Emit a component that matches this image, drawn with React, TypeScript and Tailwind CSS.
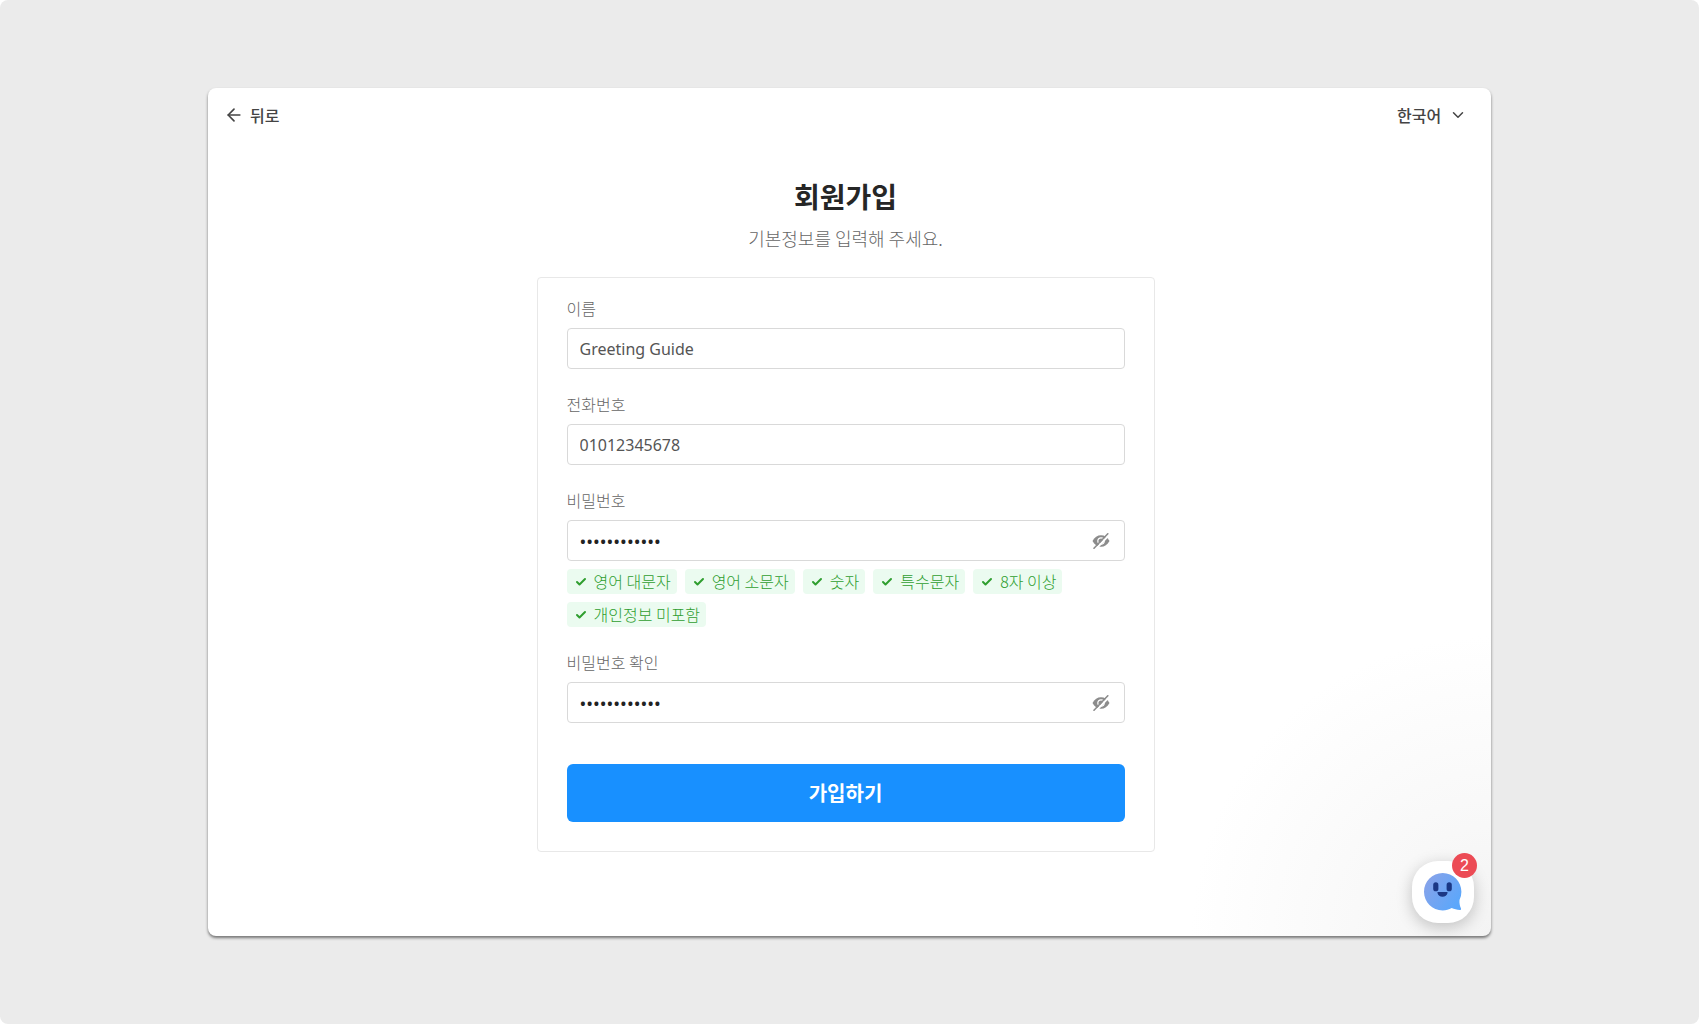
import { useState } from "react"
import { ArrowLeft, Check, ChevronDown } from "lucide-react"

const passwordRules = ["영어 대문자", "영어 소문자", "숫자", "특수문자", "8자 이상", "개인정보 미포함"]

const EyeOffIcon = () => (
    <svg width="18" height="16" viewBox="0 0 18 16" fill="none">
        <path d="M.5 8C2.500 4.200 5.500 2.200 9 2.200s6.500 2 8.500 5.800c-2 3.800-5 5.800-8.500 5.800S2.500 11.800.5 8Z" fill="#8c8c8c" />
        <circle cx="9" cy="8" r="3.200" stroke="#fff" strokeWidth="1.200" />
        <path d="M3.500 16.500 17.500 1.500" stroke="#fff" strokeWidth="2" />
        <path d="M2 15.200 15.800.8" stroke="#8c8c8c" strokeWidth="1.600" strokeLinecap="round" />
    </svg>
)

interface FieldProps {
    id: string
    label: string
    initialValue: string
    secret?: boolean
}

const Field = ({ id, label, initialValue, secret }: FieldProps) => {
    const [value, setValue] = useState(initialValue)
    const [hidden, setHidden] = useState(Boolean(secret))
    return (
        <div className="flex flex-col gap-2">
            <label htmlFor={id} className="text-base leading-[23px] font-light text-[#666]">{label}</label>
            <div className="flex h-[41px] items-center rounded border border-[#d9d9d9] bg-white pr-3.5 pl-3">
                <input
                    id={id}
                    type={hidden ? "password" : "text"}
                    value={value}
                    onChange={(e) => setValue(e.target.value)}
                    className={
                        secret
                            ? "min-w-0 flex-1 font-['Noto_Sans','Noto_Sans_CJK_KR',sans-serif] text-lg leading-6 text-[#222] outline-none"
                            : "min-w-0 flex-1 font-['Noto_Sans','Noto_Sans_CJK_KR',sans-serif] text-base leading-6 text-[#555] outline-none"
                    }
                />
                {secret && (
                    <button type="button" aria-label="비밀번호 표시" onClick={() => setHidden(!hidden)}>
                        <EyeOffIcon />
                    </button>
                )}
            </div>
        </div>
    )
}

const PasswordRules = () => (
    <ul className="mt-2 flex flex-wrap gap-2">
        {passwordRules.map((rule) => (
            <li key={rule} className="flex h-[25px] items-center gap-[7px] rounded bg-[#ebfbf0] pr-1.5 pb-0.5 pl-2 text-base font-light text-[#2f9e2f]">
                <Check size={12} strokeWidth={4} className="mt-0.5" />
                {rule}
            </li>
        ))}
    </ul>
)

const ChatButton = () => (
    <button type="button" aria-label="채팅 상담" className="absolute right-[17px] bottom-[13px] flex size-[62px] items-center justify-center rounded-[26px] bg-white shadow-[0_4px_16px_rgba(0,0,0,0.22)]">
        <svg width="40" height="40" viewBox="0 0 40 40" fill="none">
            <defs>
                <linearGradient id="bubble" x1="4" y1="8" x2="36" y2="30" gradientUnits="userSpaceOnUse">
                    <stop stopColor="#86a3ea" />
                    <stop offset="1" stopColor="#5ba7fb" />
                </linearGradient>
            </defs>
            <path d="M19.700 1C9.300 1 1 9.300 1 19.700S9.300 38.400 19.700 38.400c3.300 0 6.300-.9 9-2.400 2.500.9 5.200 1.700 8.200 2 .9.100 1.500-.8 1.100-1.600-1.200-2.600-1.800-5.400-1.500-8.400a18.600 18.600 0 0 0 1.900-8.300C38.400 9.300 30.100 1 19.700 1Z" fill="url(#bubble)" />
            <rect x="10.200" y="10.300" width="5.200" height="9" rx="2.600" fill="#1b3784" />
            <rect x="23.600" y="10.300" width="5.200" height="9" rx="2.600" fill="#1b3784" />
            <path d="M15 20h9c.5 0 .7.300.6.700-.5 2.500-2.600 4.100-5.100 4.100s-4.600-1.600-5.100-4.100c-.1-.4.100-.7.600-.7Z" fill="#1b3784" />
        </svg>
        <span className="absolute -top-2 -right-[3px] flex size-[25px] items-center justify-center rounded-full bg-[#ec4b55] font-['Liberation_Sans',sans-serif] text-base text-white">2</span>
    </button>
)

export default function App() {
    return (
        <div className="min-h-screen rounded-lg bg-[#ebebeb] px-6 py-22 font-['Noto_Sans_CJK_KR',sans-serif] lg:px-52">
            <div className="relative rounded-lg bg-white bg-[radial-gradient(circle_at_bottom_right,#f3f3f3_0,#f8f8f8_110px,#fcfcfc_220px,#fff_300px)] pb-[84px] shadow-[0_2px_3px_rgba(0,0,0,0.5)]">
                <header className="flex h-[54px] items-center justify-between pr-6 pl-4">
                    <button type="button" className="flex items-center gap-1.5 text-base font-medium text-[#444]">
                        <ArrowLeft size={20} />
                        뒤로
                    </button>
                    <div className="relative flex items-center">
                        <select aria-label="언어" className="w-[70px] appearance-none text-base font-medium text-[#444] outline-none">
                            <option>한국어</option>
                            <option>English</option>
                        </select>
                        <ChevronDown size={18} className="pointer-events-none absolute right-0 text-[#444]" />
                    </div>
                </header>

                <main className="mt-9 flex flex-col items-center px-4 sm:pr-2 sm:pl-0">
                    <h1 className="text-[28px] leading-9 font-bold text-[#262626]">회원가입</h1>
                    <p className="mt-2.5 text-lg leading-7 font-light text-[#666]">기본정보를 입력해 주세요.</p>

                    <form onSubmit={(e) => e.preventDefault()} className="mt-[25px] flex w-full max-w-[618px] flex-col gap-6 rounded border border-[#e8e8e8] bg-white px-[29px] pt-[19px] pb-[29px]">
                        <Field id="name" label="이름" initialValue="Greeting Guide" />
                        <Field id="phone" label="전화번호" initialValue="01012345678" />
                        <div>
                            <Field id="password" label="비밀번호" initialValue="Greeting123!" secret />
                            <PasswordRules />
                        </div>
                        <Field id="confirm" label="비밀번호 확인" initialValue="Greeting123!" secret />
                        <button type="submit" className="mt-[17px] h-[58px] rounded-md bg-[#1890ff] text-xl font-bold text-white">가입하기</button>
                    </form>
                </main>

                <ChatButton />
            </div>
        </div>
    )
}
